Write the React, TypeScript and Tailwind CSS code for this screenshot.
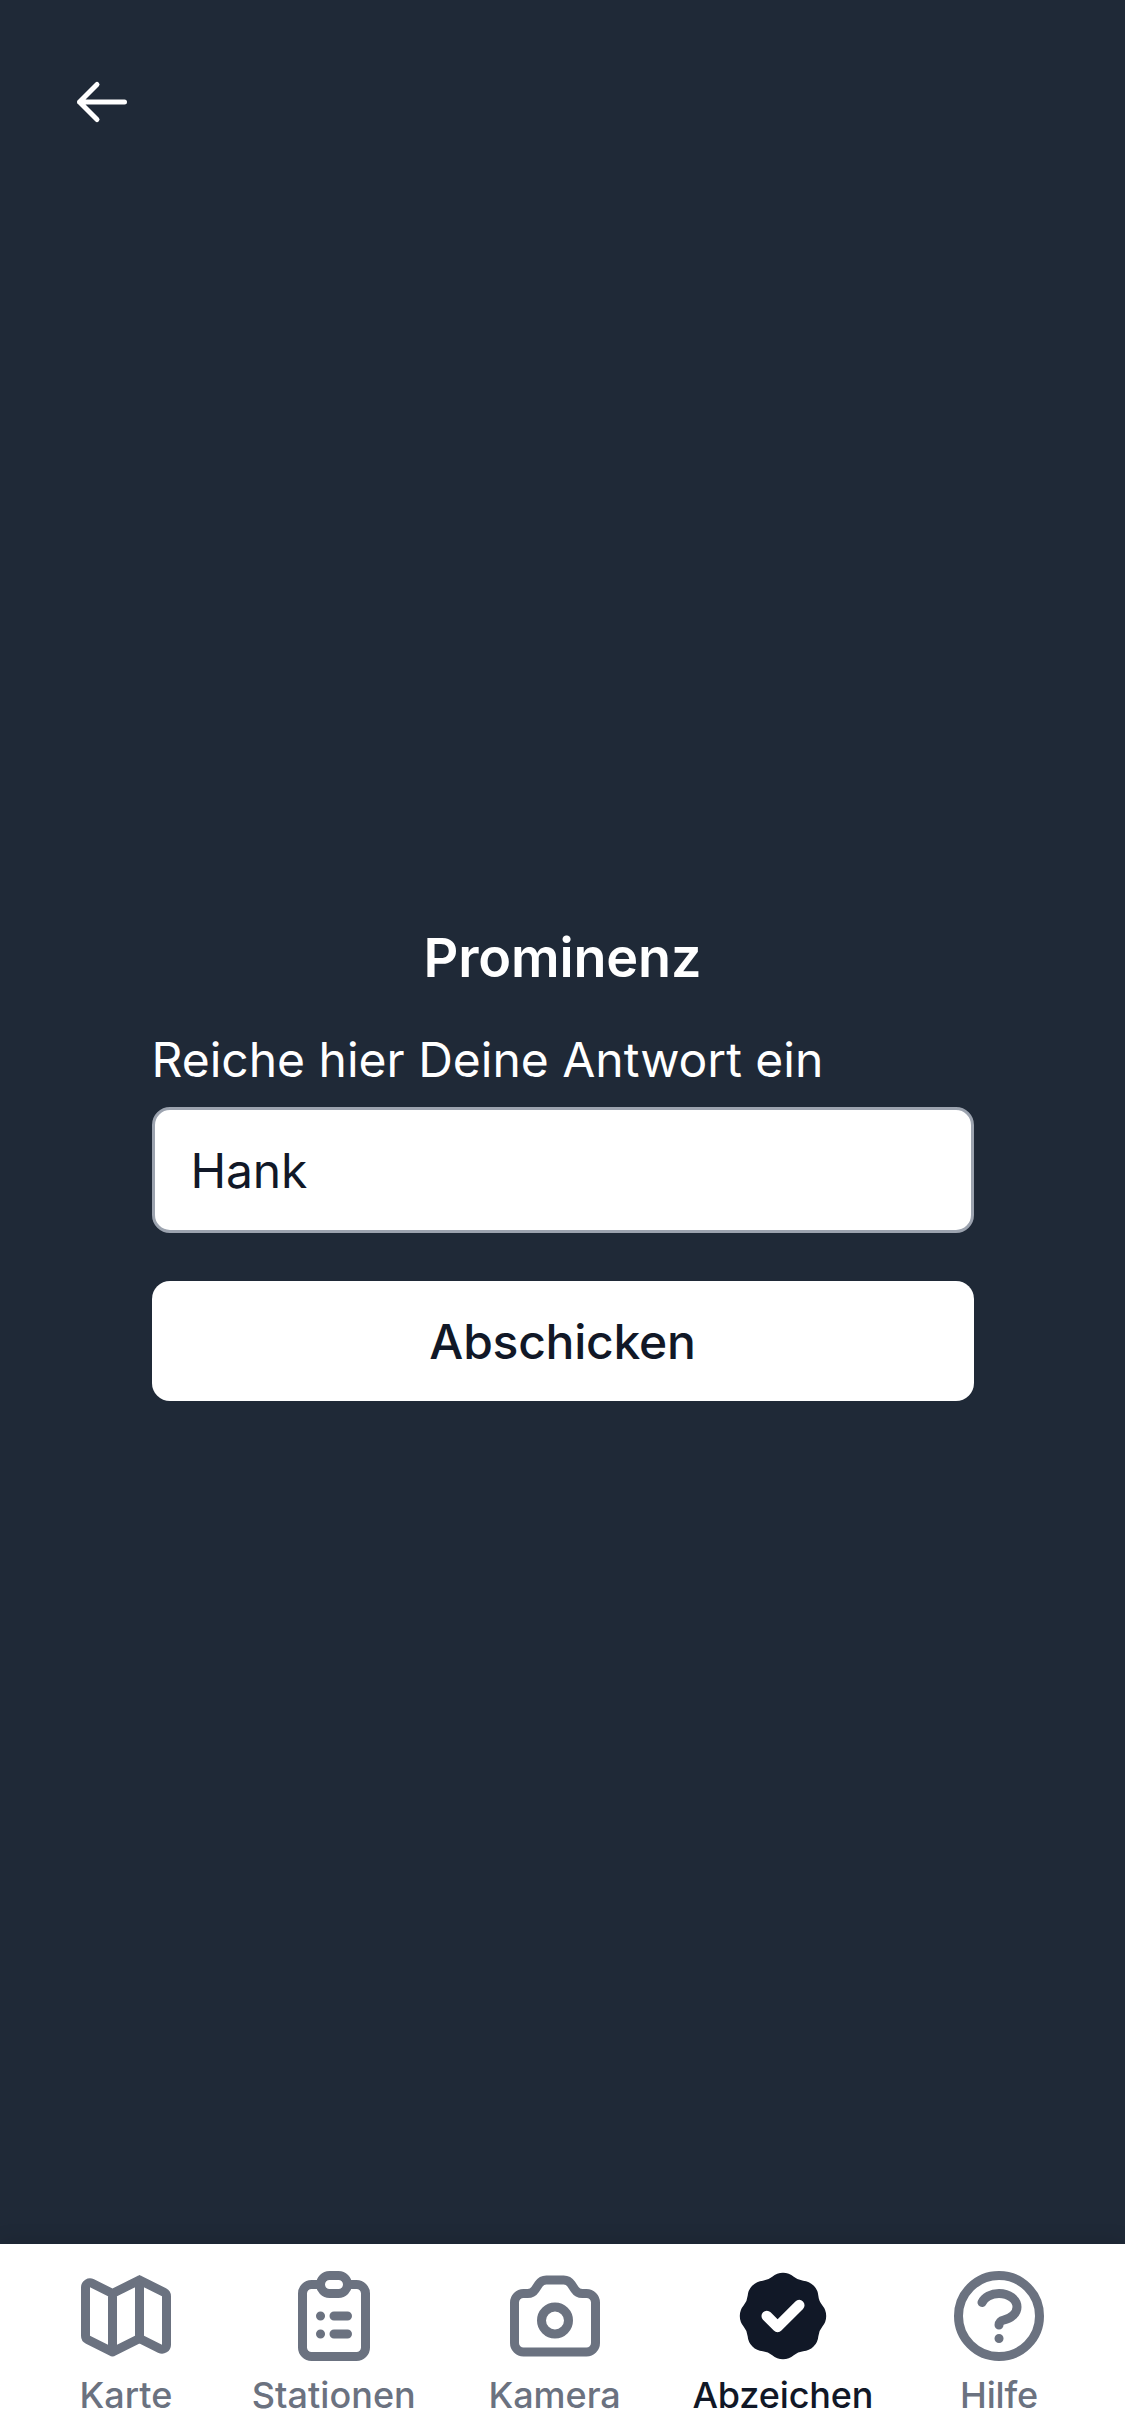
import React, { useState } from "react";
import type { IconType } from "react-icons";
import {
  HiBadgeCheck,
  HiOutlineArrowLeft,
  HiOutlineCamera,
  HiOutlineClipboardList,
  HiOutlineMap,
  HiOutlineQuestionMarkCircle,
} from "react-icons/hi";

const tabs: { label: string; icon: IconType; spacing: string; active?: boolean }[] = [
  { label: "Karte", icon: HiOutlineMap, spacing: "tracking-normal" },
  { label: "Stationen", icon: HiOutlineClipboardList, spacing: "tracking-[0.05px] mr-px" },
  { label: "Kamera", icon: HiOutlineCamera, spacing: "tracking-[-0.05px]" },
  { label: "Abzeichen", icon: HiBadgeCheck, spacing: "tracking-[-0.15px]", active: true },
  { label: "Hilfe", icon: HiOutlineQuestionMarkCircle, spacing: "tracking-[-0.2px]" },
];

function TabBar() {
  return (
    <nav className="flex h-48 shrink-0 justify-between bg-white px-[72px] pt-[18px] shadow-[0_0_20px_rgba(0,0,0,0.15)]">
      {tabs.map(({ label, icon: Icon, spacing, active }) => (
        <a
          key={label}
          href="#"
          className={`flex flex-col items-center ${spacing} ${active ? "text-[#111827]" : "text-[#6b7280]"}`}
        >
          <Icon className="size-[108px]" />
          <span className="text-[36px] leading-[50px] font-medium">{label}</span>
        </a>
      ))}
    </nav>
  );
}

function AnswerForm() {
  const [answer, setAnswer] = useState("Hank");
  return (
    <form className="flex w-[822px] flex-col" onSubmit={(e) => e.preventDefault()}>
      <h1 className="mb-[22px] text-center text-[54px] leading-[86px] font-semibold tracking-[-0.17px] text-white">
        Prominenz
      </h1>
      <label htmlFor="answer" className="mb-2.5 text-5xl leading-[74px] text-white">
        Reiche hier Deine Antwort ein
      </label>
      <input
        id="answer"
        value={answer}
        onChange={(e) => setAnswer(e.target.value)}
        className="h-[126px] rounded-[18px] border-[3px] border-[#9ca3af] bg-white px-9 text-5xl leading-[72px] tracking-[-0.2px] text-[#111827] outline-none"
      />
      <button
        type="submit"
        className="mt-12 h-[120px] rounded-[18px] bg-white pt-0.5 text-5xl leading-[72px] font-medium tracking-[-0.25px] text-[#111827]"
      >
        Abschicken
      </button>
    </form>
  );
}

export default function App() {
  return (
    <div className="flex h-[2436px] w-[1125px] flex-col bg-[#1f2937] font-['Inter',sans-serif]">
      <header className="flex h-[132px] shrink-0 items-end px-[72px]">
        <button type="button" aria-label="Zurück" className="text-white">
          <HiOutlineArrowLeft className="size-[60px]" />
        </button>
      </header>
      <main className="flex flex-1 items-center justify-center pb-[60px]">
        <AnswerForm />
      </main>
      <TabBar />
    </div>
  );
}
